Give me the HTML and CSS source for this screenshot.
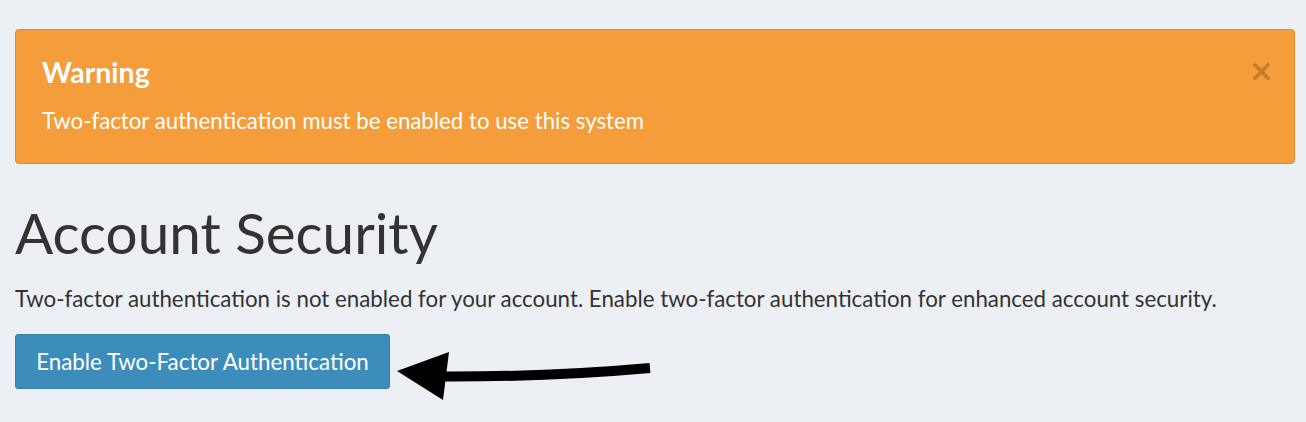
FILE: index.html
```html
<!DOCTYPE html>
<html>
<head>
<meta charset="utf-8">
<link rel="stylesheet" href="styles.css">
</head>
<body>
<div class="page">
  <div class="alert">
    <button class="close" type="button">×</button>
    <h4 class="alert-title">Warning</h4>
    <p class="alert-text">Two-factor authentication must be enabled to use this system</p>
  </div>
  <h1 class="title">Account Security</h1>
  <p class="lead">Two-factor authentication is not enabled for your account. Enable two-factor authentication for enhanced account security.</p>
  <div class="actions">
    <button class="btn" type="button">Enable Two-Factor Authentication</button>
  </div>
  <svg class="arrow" width="280" height="70" viewBox="380 340 280 70" xmlns="http://www.w3.org/2000/svg">
    <path d="M440 376.5 Q 550 377 650 368" fill="none" stroke="#000" stroke-width="10"/>
    <polygon points="397,371 449,352 443,400" fill="#000"/>
  </svg>
</div>
</body>
</html>
```
FILE: styles.css
```css
html, body {
  margin: 0;
  padding: 0;
  background: #ecf0f5;
}
body {
  font-family: Lato, "Open Sans", sans-serif;
  color: #333;
}
.page {
  position: relative;
  box-sizing: border-box;
  min-height: 422px;
  padding: 29px 11px 0 15px;
}
.alert {
  position: relative;
  background: #f49d3a;
  border: 1px solid #e08a2c;
  border-radius: 4px;
  padding: 25px 26px 28px 26px;
  color: #fff;
}
.alert-title {
  margin: 0;
  font-size: 28.5px;
  font-weight: 700;
  line-height: 34px;
}
.alert-text {
  margin: 18px 0 0 0;
  font-size: 22.25px;
  line-height: 28px;
}
.close {
  position: absolute;
  top: 26px;
  right: 20px;
  background: none;
  border: 0;
  padding: 0;
  font-family: "DejaVu Sans", sans-serif;
  font-size: 30px;
  font-weight: 700;
  line-height: 30px;
  color: #000;
  opacity: 0.2;
}
.title {
  margin: 36px 0 0 0;
  font-size: 56.6px;
  font-weight: 400;
  line-height: 64px;
}
.lead {
  margin: 21px 0 0 0;
  font-size: 22.3px;
  line-height: 28px;
}
.actions {
  margin-top: 21px;
}
.btn {
  display: block;
  width: 375px;
  height: 55px;
  background: #3c8dbc;
  border: 1px solid #367fa9;
  border-radius: 3px;
  color: #fff;
  font-family: Lato, "Open Sans", sans-serif;
  font-size: 22.35px;
  padding: 0;
}
.arrow {
  position: absolute;
  left: 380px;
  top: 340px;
}
```
